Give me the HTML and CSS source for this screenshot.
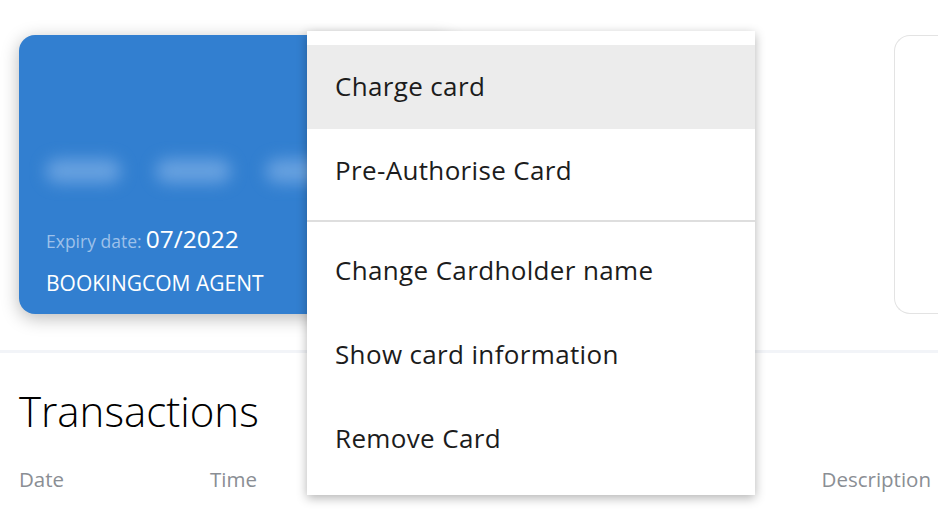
FILE: index.html
```html
<!DOCTYPE html>
<html>
<head>
<meta charset="utf-8">
<link rel="stylesheet" href="styles.css">
</head>
<body>
<div class="page">
  <section class="cards">
    <div class="card">
      <div class="number">
        <span class="blob"></span><span class="blob"></span><span class="blob"></span><span class="blob"></span>
      </div>
      <div class="expiry"><span class="label">Expiry date:</span> <span class="value">07/2022</span></div>
      <div class="holder">BOOKINGCOM AGENT</div>
    </div>
    <div class="spacer"></div>
    <div class="outline-card"></div>
  </section>
  <section class="transactions">
    <h1 class="title">Transactions</h1>
    <div class="thead">
      <span class="col col-date">Date</span>
      <span class="col col-time">Time</span>
      <span class="col col-desc">Description</span>
    </div>
  </section>
  <ul class="menu">
    <li class="item active">Charge card</li>
    <li class="item">Pre-Authorise Card</li>
    <li class="divider"></li>
    <li class="item">Change Cardholder name</li>
    <li class="item">Show card information</li>
    <li class="item">Remove Card</li>
  </ul>
</div>
</body>
</html>
```
FILE: styles.css
```css
* { box-sizing: border-box; }
html, body { margin: 0; padding: 0; background: #fff; }
body { font-family: "Open Sans", "Liberation Sans", sans-serif; color: #1b1b1b; }
.page { position: relative; width: 938px; height: 525px; overflow: hidden; }

.cards { display: flex; padding: 35px 0 0 19px; height: 353px; border-bottom: 3px solid #f2f4f8; }
.card {
  width: 436px; height: 279px; background: #327fd0; border-radius: 16px;
  box-shadow: 0 4px 18px rgba(0,0,0,0.28);
  padding: 0 0 0 27px; display: flex; flex-direction: column;
}
.number { display: flex; gap: 35px; margin-top: 124px; height: 26px; }
.blob { width: 75px; height: 24px; border-radius: 12px; background: rgba(140,185,235,0.6); filter: blur(8px); }
.expiry { margin-top: 39px; line-height: 30px; }
.label { font-size: 17.5px; color: #9dc1ea; }
.value { font-size: 24.5px; color: #fff; }
.holder { margin-top: 12px; font-size: 21px; color: #fff; line-height: 28px; }
.spacer { flex: 1; }
.outline-card { width: 44px; height: 279px; border: 1px solid #e3e3e3; border-right: none; border-radius: 16px 0 0 16px; }

.transactions { padding: 0 7px 0 19px; height: 158px; border-bottom: 3px solid #f2f4f8; }
.title { margin: 30px 0 0; font-weight: 300; font-size: 42px; line-height: 56px; color: #000; }
.thead { display: flex; margin-top: 25px; font-size: 20.5px; color: #8a8e94; line-height: 30px; }
.col-date { width: 191px; }
.col-time { flex: 1; }

.menu {
  position: absolute; left: 307px; top: 31px; width: 448px; margin: 0; padding: 14px 0;
  list-style: none; background: #fff; box-shadow: 0 3px 10px rgba(0,0,0,0.3);
}
.item { height: 84px; display: flex; align-items: center; padding: 0 0 3px 28px; font-size: 26px; letter-spacing: 0.35px; color: #1c1c1c; }
.item.active { background: #ececec; }
.divider { height: 2px; background: #dedede; margin: 7px 0; }
```
